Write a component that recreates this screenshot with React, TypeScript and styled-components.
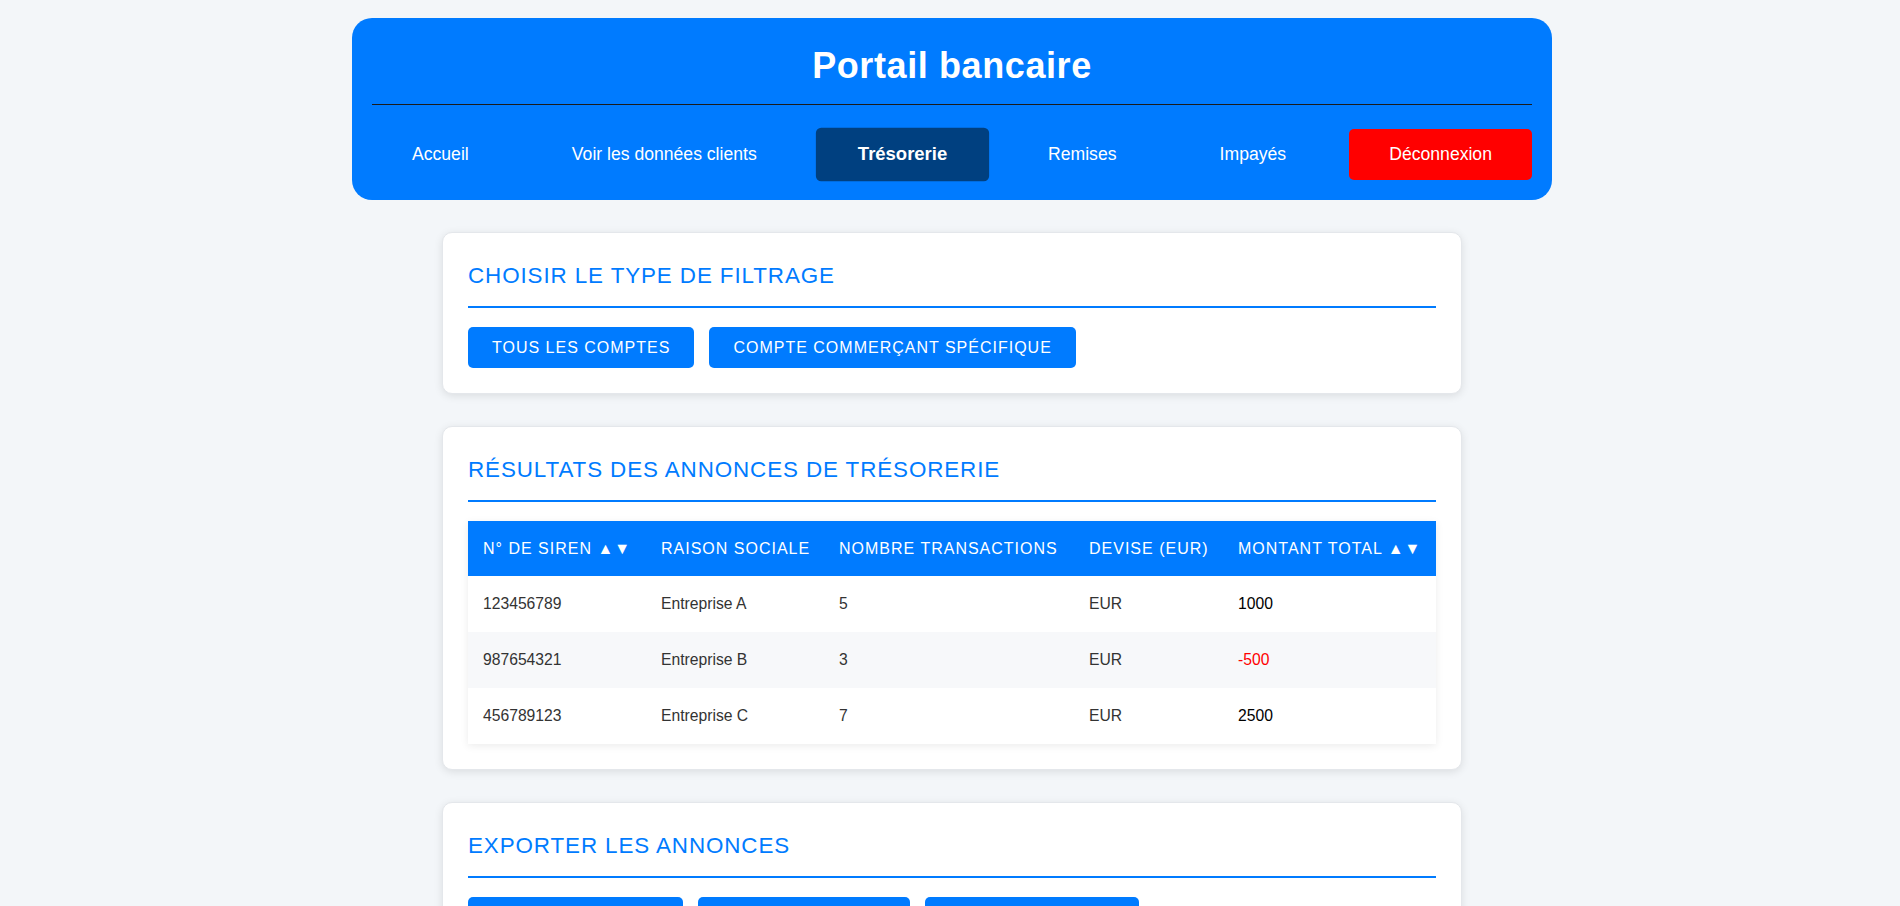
import styled, { createGlobalStyle } from 'styled-components';

interface Announcement {
  siren: string;
  company: string;
  count: number;
  currency: string;
  amount: number;
}

const ANNOUNCEMENTS: Announcement[] = [
  { siren: '123456789', company: 'Entreprise A', count: 5, currency: 'EUR', amount: 1000 },
  { siren: '987654321', company: 'Entreprise B', count: 3, currency: 'EUR', amount: -500 },
  { siren: '456789123', company: 'Entreprise C', count: 7, currency: 'EUR', amount: 2500 },
];

const NAV_ITEMS = [
  { label: 'Accueil' },
  { label: 'Voir les données clients' },
  { label: 'Trésorerie', active: true },
  { label: 'Remises' },
  { label: 'Impayés' },
  { label: 'Déconnexion', danger: true },
];

function App() {
  return (
    <>
      <GlobalStyle />
      <Page>
        <Header>
          <Title>Portail bancaire</Title>
          <Nav>
            {NAV_ITEMS.map((item) => (
              <NavLink key={item.label} $active={item.active} $danger={item.danger}>
                {item.label}
              </NavLink>
            ))}
          </Nav>
        </Header>

        <Card>
          <CardTitle>Choisir le type de filtrage</CardTitle>
          <ButtonRow>
            <ActionButton>Tous les comptes</ActionButton>
            <ActionButton>Compte commerçant spécifique</ActionButton>
          </ButtonRow>
        </Card>

        <Card>
          <CardTitle>Résultats des annonces de trésorerie</CardTitle>
          <Table>
            <colgroup>
              <col style={{ width: 178 }} />
              <col style={{ width: 178 }} />
              <col style={{ width: 250 }} />
              <col style={{ width: 149 }} />
              <col />
            </colgroup>
            <thead>
              <tr>
                <Th>N° de SIREN ▲▼</Th>
                <Th>Raison sociale</Th>
                <Th>Nombre transactions</Th>
                <Th>Devise (EUR)</Th>
                <Th>Montant total ▲▼</Th>
              </tr>
            </thead>
            <tbody>
              {ANNOUNCEMENTS.map((row, i) => (
                <Row key={row.siren} $striped={i % 2 === 1}>
                  <Td>{row.siren}</Td>
                  <Td>{row.company}</Td>
                  <Td>{row.count}</Td>
                  <Td>{row.currency}</Td>
                  <AmountCell $negative={row.amount < 0}>{row.amount}</AmountCell>
                </Row>
              ))}
            </tbody>
          </Table>
        </Card>

        <Card>
          <CardTitle>Exporter les annonces</CardTitle>
          <ButtonRow>
            <ActionButton>Exporter en CSV</ActionButton>
            <ActionButton>Exporter en XLS</ActionButton>
            <ActionButton>Exporter en PDF</ActionButton>
          </ButtonRow>
        </Card>
      </Page>
    </>
  );
}

export default App;

const GlobalStyle = createGlobalStyle`
  body {
    margin: 0;
    background: #f3f6f9;
    font-family: "Liberation Sans", Arial, sans-serif;
  }
`;

const Page = styled.div`
  display: flex;
  flex-direction: column;
  align-items: center;
  gap: 32px;
  padding: 18px 0 40px 4px;
`;

const Header = styled.header`
  width: 1200px;
  box-sizing: border-box;
  background: #007bff;
  border-radius: 20px;
  padding: 20px 20px 20px;
`;

const Title = styled.h1`
  margin: 9px 0 0;
  padding-bottom: 20px;
  border-bottom: 1px solid #1c1c1c;
  color: #fff;
  font-size: 36px;
  line-height: 37px;
  font-weight: bold;
  letter-spacing: 0.6px;
  text-align: center;
`;

const Nav = styled.nav`
  display: flex;
  justify-content: space-between;
  align-items: center;
  margin-top: 24px;
`;

const NavLink = styled.a<{ $active?: boolean; $danger?: boolean }>`
  display: block;
  padding: 15px 40px;
  border-radius: 5px;
  color: #fff;
  font-size: 17.6px;
  line-height: 21px;
  text-decoration: none;
  cursor: pointer;
  background: ${({ $active, $danger }) => ($active ? '#004080' : $danger ? '#ff0000' : 'transparent')};
  font-weight: ${({ $active }) => ($active ? 'bold' : 'normal')};
  transform: ${({ $active }) => ($active ? 'scale(1.05)' : 'none')};
`;

const Card = styled.section`
  width: 1020px;
  box-sizing: border-box;
  background: #fff;
  border: 1px solid #e4e7eb;
  border-radius: 10px;
  box-shadow: 0 2px 8px rgba(0, 0, 0, 0.1);
  padding: 25px;
`;

const CardTitle = styled.h2`
  margin: 5px 0 19px;
  padding-bottom: 18px;
  border-bottom: 2px solid #007bff;
  color: #007bff;
  font-size: 22.4px;
  font-weight: normal;
  line-height: 25px;
  letter-spacing: 0.9px;
  text-transform: uppercase;
`;

const ButtonRow = styled.div`
  display: flex;
  gap: 15px;
`;

const ActionButton = styled.button`
  background: #007bff;
  color: #fff;
  border: none;
  border-radius: 5px;
  padding: 11px 24px;
  font-family: inherit;
  font-size: 16px;
  line-height: 19px;
  letter-spacing: 1px;
  text-transform: uppercase;
  cursor: pointer;
`;

const Table = styled.table`
  width: 100%;
  table-layout: fixed;
  border-collapse: collapse;
  margin-top: 1px;
  box-shadow: 0 2px 8px rgba(0, 0, 0, 0.08);
`;

const Th = styled.th`
  background: #007bff;
  color: #fff;
  text-align: left;
  padding: 18px 15px;
  font-size: 16px;
  font-weight: normal;
  line-height: 19px;
  letter-spacing: 1px;
  text-transform: uppercase;
  white-space: nowrap;
`;

const Row = styled.tr<{ $striped?: boolean }>`
  background: ${({ $striped }) => ($striped ? '#f7f8fa' : '#fff')};
`;

const Td = styled.td`
  padding: 18px 15px;
  color: #333;
  font-size: 15.7px;
  line-height: 20px;
`;

const AmountCell = styled(Td)<{ $negative?: boolean }>`
  color: ${({ $negative }) => ($negative ? '#ff0000' : '#000')};
`;
